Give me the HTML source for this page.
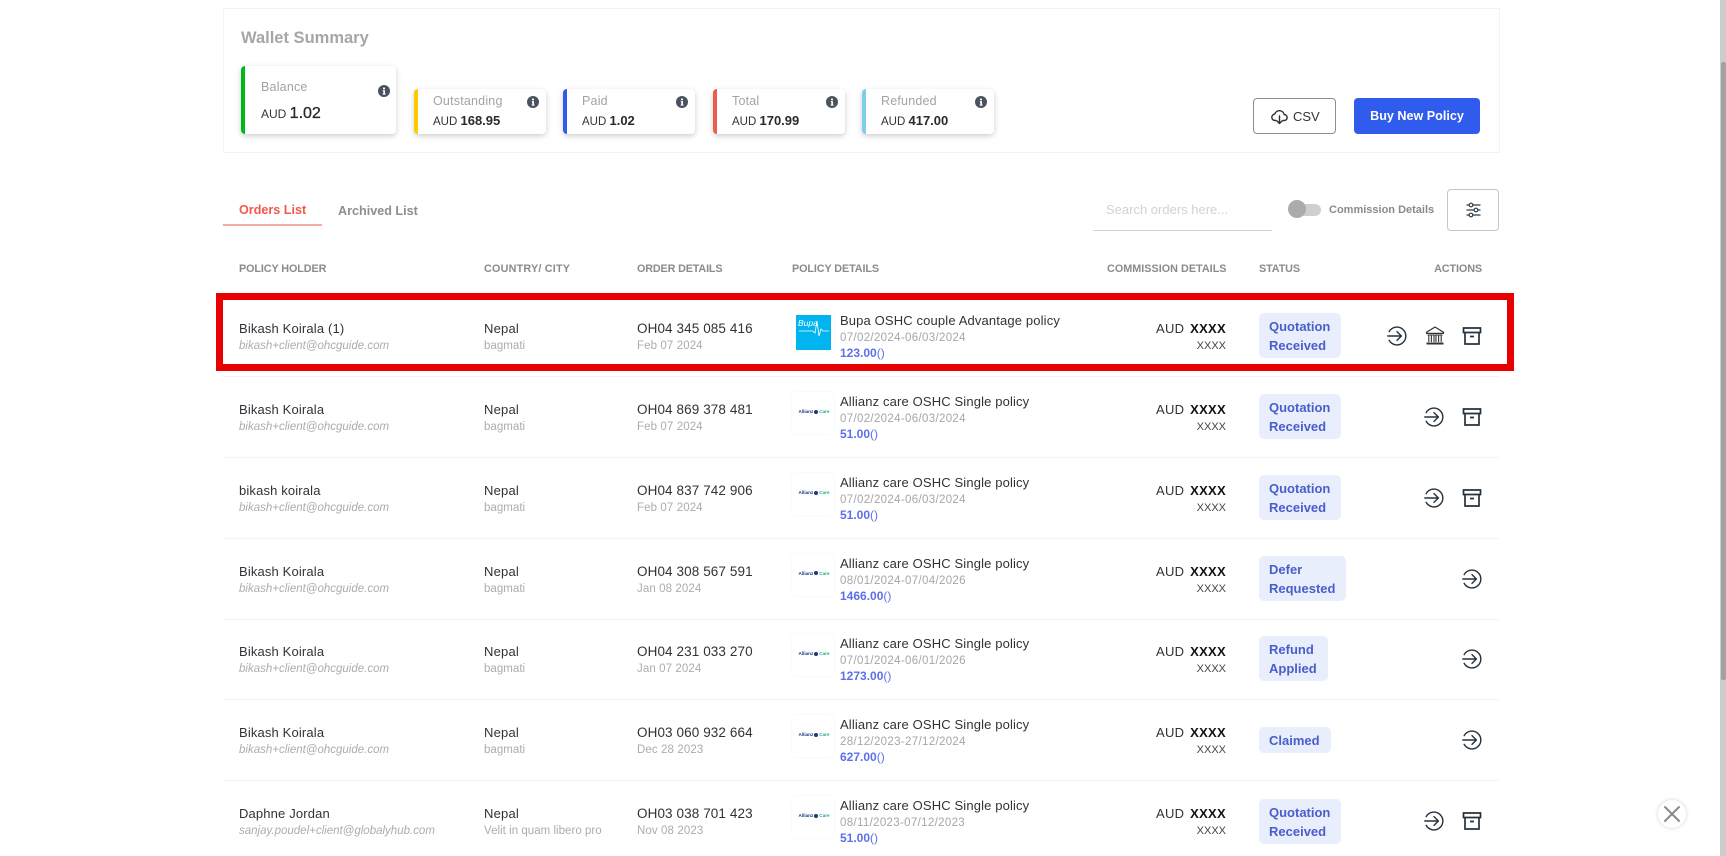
<!DOCTYPE html>
<html lang="en">
<head>
<meta charset="utf-8">
<title>Orders</title>
<style>
html,body{margin:0;padding:0;width:1726px;height:856px;overflow:hidden;background:#fff}
body{position:relative;font-family:"Liberation Sans",sans-serif;color:#2a2f36}
.a{position:absolute;white-space:nowrap}
.box{position:absolute;left:223px;top:8px;width:1275px;height:143px;border:1px solid #f3f3f3}
.card{position:absolute;background:#fff;border-radius:4px;box-shadow:0 2px 6px rgba(0,0,0,.2);box-sizing:border-box;border-left:4px solid}
.card .l{position:absolute;left:15px;top:9px;font-size:12.5px;line-height:16px;color:#a3a3a3;letter-spacing:.2px}
.card .v{position:absolute;left:15px;top:25px;font-size:11.5px;line-height:18px;color:#333;white-space:nowrap}
.card .v b{font-size:13px;font-weight:bold;color:#2a2a2a;letter-spacing:0}
.card svg{position:absolute;right:7px;top:6px}
.big .l{left:16px;top:13px}.big .v{left:16px;top:39px;font-size:12px}.big .v b{font-size:16px;font-weight:normal;-webkit-text-stroke:.3px #222;letter-spacing:0}
.th{position:absolute;top:262px;font-size:10.8px;line-height:14px;color:#8b8b8b;font-weight:bold;letter-spacing:-.1px;white-space:nowrap}
.row{position:absolute;left:0;width:1726px;height:81px}
.row .ln{position:absolute;left:223px;right:227px;top:81px;height:1px;background:#f3f3f3}
.nm{position:absolute;left:239px;top:26px;font-size:13px;line-height:16px;color:#2f3338;letter-spacing:.15px;white-space:nowrap}
.em{position:absolute;left:239px;top:44px;font-size:11.5px;line-height:14px;color:#acacac;font-style:italic;letter-spacing:0;white-space:nowrap}
.ct{position:absolute;left:484px;top:26px;font-size:13px;line-height:16px;color:#2f3338;letter-spacing:.2px;white-space:nowrap}
.ci{position:absolute;left:484px;top:44px;font-size:11.5px;line-height:14px;color:#acacac;letter-spacing:.03px;white-space:nowrap}
.od{position:absolute;left:637px;top:26px;font-size:13.5px;line-height:16px;color:#2f3338;letter-spacing:.1px;white-space:nowrap}
.dt{position:absolute;left:637px;top:44px;font-size:11.5px;line-height:14px;color:#acacac;letter-spacing:.1px;white-space:nowrap}
.lg{position:absolute;left:792px;top:16px;width:42px;height:42px;background:#fff;border-radius:4px;box-shadow:0 0 2px rgba(0,0,0,.06);overflow:hidden}
.bp{position:absolute;left:4px;top:4px;width:35px;height:35px;background:#00b4f0}
.bp span{position:absolute;left:2px;top:3px;font-size:8.5px;line-height:10px;font-style:italic;color:#fff}
.bp svg{position:absolute;left:0;top:0}
.az{position:absolute;left:4px;top:17px;width:36px;text-align:center;font-size:4.6px;line-height:6px;font-weight:bold;color:#1a3a7c;white-space:nowrap}
.az i{font-style:normal;color:#2aa58c}
.az u{display:inline-block;width:4px;height:4px;border-radius:50%;background:#1a3a7c;margin:0 1px;vertical-align:-.5px;text-decoration:none}
.pt{position:absolute;left:840px;top:18px;font-size:13px;line-height:16px;color:#2f3338;letter-spacing:.14px;white-space:nowrap}
.pd{position:absolute;left:840px;top:36px;font-size:11.5px;line-height:14px;color:#a6a6a6;letter-spacing:.33px;white-space:nowrap}
.pa{position:absolute;left:840px;top:51px;font-size:12px;line-height:14px;color:#5b70ea;font-weight:bold;white-space:nowrap}
.pa span{font-weight:normal}
.au{position:absolute;left:1156px;top:26px;font-size:13px;line-height:16px;color:#333;letter-spacing:.3px}
.xb{position:absolute;right:500px;top:26px;font-size:13px;line-height:16px;color:#111;font-weight:bold;letter-spacing:.3px}
.xs{position:absolute;right:500px;top:44px;font-size:11px;line-height:14px;color:#444;letter-spacing:0}
.bd{position:absolute;left:1259px;top:18px;height:45px;box-sizing:border-box;padding:4px 11px 4px 10px;background:#e8eefc;border-radius:5px;font-size:13px;line-height:19px;color:#4a5ecb;font-weight:bold;letter-spacing:0;white-space:nowrap}
.bd.one{top:27px;height:26px;padding:4px 11px 4px 10px}
.ic{position:absolute;top:31px}
</style>
</head>
<body>
<svg width="0" height="0" style="position:absolute">
<symbol id="arrow" viewBox="0 0 20 20"><path d="M2.2 5.6A8.9 8.9 0 1 1 2.2 14.4" fill="none" stroke="#25323d" stroke-width="1.4" stroke-linecap="round"/><path d="M.8 10H14.2M10 5.6l4.4 4.4L10 14.4" fill="none" stroke="#25323d" stroke-width="1.4" stroke-linecap="round" stroke-linejoin="round"/></symbol>
<symbol id="arch" viewBox="0 0 20 20"><path d="M1.5 2h17v4.5h-17zM3 6.5V18h14V6.5M8 10.5h4" fill="none" stroke="#25323d" stroke-width="1.7"/></symbol>
<symbol id="bank" viewBox="0 0 20 20"><path d="M10 1L18.5 6.3V7.4H1.5V6.3z" fill="none" stroke="#333" stroke-width="1.2" stroke-linejoin="round"/><path d="M2.5 9h15M3.8 9.5v6.5M6.4 9.5v6.5M9 9.5v6.5M11 9.5v6.5M13.6 9.5v6.5M16.2 9.5v6.5" fill="none" stroke="#333" stroke-width="1.1"/><path d="M1.5 16.5h17v2h-17z" fill="#333"/></symbol>
<symbol id="info" viewBox="0 0 12 12"><circle cx="6" cy="6" r="6" fill="#4a5260"/><path d="M5 2.6h2v1.6H5zM4.8 5.1h2.2v3.5h.6v1H4.6v-1h.7V6.1h-.5z" fill="#fff"/></symbol>
</svg>

<div class="box"></div>
<div class="a" style="left:241px;top:28px;font-size:16.5px;line-height:20px;font-weight:bold;color:#a6a6a6">Wallet Summary</div>

<div class="card big" style="left:241px;top:66px;width:155px;height:68px;border-left-color:#00b81c"><div class="l">Balance</div><div class="v">AUD <b>1.02</b></div><svg width="12" height="12" style="top:19px;right:6px"><use href="#info"/></svg></div>
<div class="card" style="left:414px;top:89px;width:132px;height:45px;border-left-color:#ffcb00"><div class="l" style="top:4px">Outstanding</div><div class="v" style="top:23px">AUD <b>168.95</b></div><svg width="12" height="12" style="top:7px"><use href="#info"/></svg></div>
<div class="card" style="left:563px;top:89px;width:132px;height:45px;border-left-color:#2f5cec"><div class="l" style="top:4px">Paid</div><div class="v" style="top:23px">AUD <b>1.02</b></div><svg width="12" height="12" style="top:7px"><use href="#info"/></svg></div>
<div class="card" style="left:713px;top:89px;width:132px;height:45px;border-left-color:#ec5b4c"><div class="l" style="top:4px">Total</div><div class="v" style="top:23px">AUD <b>170.99</b></div><svg width="12" height="12" style="top:7px"><use href="#info"/></svg></div>
<div class="card" style="left:862px;top:89px;width:132px;height:45px;border-left-color:#7fcdee"><div class="l" style="top:4px">Refunded</div><div class="v" style="top:23px">AUD <b>417.00</b></div><svg width="12" height="12" style="top:7px"><use href="#info"/></svg></div>

<div class="a" style="left:1253px;top:98px;width:83px;height:36px;box-sizing:border-box;border:1px solid #8e8e8e;border-radius:4px;background:#fff"></div>
<svg class="a" style="left:1271px;top:108px" width="17" height="17" viewBox="0 0 17 17"><path d="M5 12.5H4.2a3.2 3.2 0 0 1-.4-6.4 4.8 4.8 0 0 1 9.3.4 3 3 0 0 1 .1 6H12M8.5 8v7.5M6 13l2.5 2.5L11 13" fill="none" stroke="#2a2f36" stroke-width="1.4" stroke-linecap="round" stroke-linejoin="round"/></svg>
<div class="a" style="left:1293px;top:109px;font-size:13px;line-height:16px;color:#333">CSV</div>
<div class="a" style="left:1354px;top:98px;width:126px;height:36px;background:#2f5cec;border-radius:4px;color:#fff;font-size:12.6px;font-weight:bold;line-height:36px;text-align:center">Buy New Policy</div>

<div class="a" style="left:239px;top:202px;font-size:12.6px;line-height:16px;font-weight:bold;color:#f0594c">Orders List</div>
<div class="a" style="left:223px;top:224px;width:99px;height:2px;background:#f6aaa4"></div>
<div class="a" style="left:338px;top:203px;font-size:12.6px;line-height:16px;font-weight:bold;color:#8e8e8e">Archived List</div>

<div class="a" style="left:1093px;top:230px;width:179px;height:1px;background:#d4d4d4"></div>
<div class="a" style="left:1106px;top:202px;font-size:13px;line-height:16px;color:#d2d2d2">Search orders here...</div>
<div class="a" style="left:1290px;top:204px;width:31px;height:12px;background:#cfcfcf;border-radius:6px"></div>
<div class="a" style="left:1288px;top:200px;width:18px;height:18px;background:#ababab;border-radius:50%"></div>
<div class="a" style="left:1329px;top:203px;font-size:11px;line-height:15px;font-weight:bold;color:#8a8a8a">Commission Details</div>
<div class="a" style="left:1447px;top:189px;width:52px;height:42px;box-sizing:border-box;border:1px solid #c6c6c6;border-radius:4px;background:#fff"></div>
<svg class="a" style="left:1466px;top:202px" width="15" height="16" viewBox="0 0 15 16"><path d="M.5 3h14M.5 8h14M.5 13h14" stroke="#2f3c48" stroke-width="1.3" fill="none"/><circle cx="5" cy="3" r="1.8" fill="#fff" stroke="#2f3c48" stroke-width="1.2"/><circle cx="10" cy="8" r="1.8" fill="#fff" stroke="#2f3c48" stroke-width="1.2"/><circle cx="5" cy="13" r="1.8" fill="#fff" stroke="#2f3c48" stroke-width="1.2"/></svg>

<div class="th" style="left:239px">POLICY HOLDER</div>
<div class="th" style="left:484px;letter-spacing:.2px">COUNTRY/ CITY</div>
<div class="th" style="left:637px;letter-spacing:-.15px">ORDER DETAILS</div>
<div class="th" style="left:792px">POLICY DETAILS</div>
<div class="th" style="left:1107px;letter-spacing:.02px">COMMISSION DETAILS</div>
<div class="th" style="left:1259px">STATUS</div>
<div class="th" style="right:244px">ACTIONS</div>

<div class="row" style="top:295px"><div class="ln"></div>
<div class="nm">Bikash Koirala (1)</div><div class="em">bikash+client@ohcguide.com</div>
<div class="ct">Nepal</div><div class="ci">bagmati</div>
<div class="od">OH04 345 085 416</div><div class="dt">Feb 07 2024</div>
<div class="lg"><div class="bp"><span>Bupa</span><svg width="35" height="35" viewBox="0 0 35 35"><path d="M3 16h14l2 2 2-12 2 15 2-7 2 2h6" fill="none" stroke="#fff" stroke-width=".8"/></svg></div></div>
<div class="pt">Bupa OSHC couple Advantage policy</div><div class="pd">07/02/2024-06/03/2024</div><div class="pa">123.00<span>()</span></div>
<div class="au">AUD</div><div class="xb">XXXX</div><div class="xs">XXXX</div>
<div class="bd">Quotation<br>Received</div>
<svg class="ic" style="left:1387px" width="20" height="20"><use href="#arrow"/></svg>
<svg class="ic" style="left:1425px" width="20" height="20"><use href="#bank"/></svg>
<svg class="ic" style="left:1462px" width="20" height="20"><use href="#arch"/></svg>
</div>

<div class="row" style="top:376px"><div class="ln"></div>
<div class="nm">Bikash Koirala</div><div class="em">bikash+client@ohcguide.com</div>
<div class="ct">Nepal</div><div class="ci">bagmati</div>
<div class="od">OH04 869 378 481</div><div class="dt">Feb 07 2024</div>
<div class="lg"><div class="az">Allianz<u></u><i>Care</i></div></div>
<div class="pt">Allianz care OSHC Single policy</div><div class="pd">07/02/2024-06/03/2024</div><div class="pa">51.00<span>()</span></div>
<div class="au">AUD</div><div class="xb">XXXX</div><div class="xs">XXXX</div>
<div class="bd">Quotation<br>Received</div>
<svg class="ic" style="left:1424px" width="20" height="20"><use href="#arrow"/></svg>
<svg class="ic" style="left:1462px" width="20" height="20"><use href="#arch"/></svg>
</div>

<div class="row" style="top:457px"><div class="ln"></div>
<div class="nm">bikash koirala</div><div class="em">bikash+client@ohcguide.com</div>
<div class="ct">Nepal</div><div class="ci">bagmati</div>
<div class="od">OH04 837 742 906</div><div class="dt">Feb 07 2024</div>
<div class="lg"><div class="az">Allianz<u></u><i>Care</i></div></div>
<div class="pt">Allianz care OSHC Single policy</div><div class="pd">07/02/2024-06/03/2024</div><div class="pa">51.00<span>()</span></div>
<div class="au">AUD</div><div class="xb">XXXX</div><div class="xs">XXXX</div>
<div class="bd">Quotation<br>Received</div>
<svg class="ic" style="left:1424px" width="20" height="20"><use href="#arrow"/></svg>
<svg class="ic" style="left:1462px" width="20" height="20"><use href="#arch"/></svg>
</div>

<div class="row" style="top:537.6px"><div class="ln"></div>
<div class="nm">Bikash Koirala</div><div class="em">bikash+client@ohcguide.com</div>
<div class="ct">Nepal</div><div class="ci">bagmati</div>
<div class="od">OH04 308 567 591</div><div class="dt">Jan 08 2024</div>
<div class="lg"><div class="az">Allianz<u></u><i>Care</i></div></div>
<div class="pt">Allianz care OSHC Single policy</div><div class="pd">08/01/2024-07/04/2026</div><div class="pa">1466.00<span>()</span></div>
<div class="au">AUD</div><div class="xb">XXXX</div><div class="xs">XXXX</div>
<div class="bd">Defer<br>Requested</div>
<svg class="ic" style="left:1462px" width="20" height="20"><use href="#arrow"/></svg>
</div>

<div class="row" style="top:618.4px"><div class="ln"></div>
<div class="nm">Bikash Koirala</div><div class="em">bikash+client@ohcguide.com</div>
<div class="ct">Nepal</div><div class="ci">bagmati</div>
<div class="od">OH04 231 033 270</div><div class="dt">Jan 07 2024</div>
<div class="lg"><div class="az">Allianz<u></u><i>Care</i></div></div>
<div class="pt">Allianz care OSHC Single policy</div><div class="pd">07/01/2024-06/01/2026</div><div class="pa">1273.00<span>()</span></div>
<div class="au">AUD</div><div class="xb">XXXX</div><div class="xs">XXXX</div>
<div class="bd">Refund<br>Applied</div>
<svg class="ic" style="left:1462px" width="20" height="20"><use href="#arrow"/></svg>
</div>

<div class="row" style="top:699.2px"><div class="ln"></div>
<div class="nm">Bikash Koirala</div><div class="em">bikash+client@ohcguide.com</div>
<div class="ct">Nepal</div><div class="ci">bagmati</div>
<div class="od">OH03 060 932 664</div><div class="dt">Dec 28 2023</div>
<div class="lg"><div class="az">Allianz<u></u><i>Care</i></div></div>
<div class="pt">Allianz care OSHC Single policy</div><div class="pd">28/12/2023-27/12/2024</div><div class="pa">627.00<span>()</span></div>
<div class="au">AUD</div><div class="xb">XXXX</div><div class="xs">XXXX</div>
<div class="bd one" style="top:28px">Claimed</div>
<svg class="ic" style="left:1462px" width="20" height="20"><use href="#arrow"/></svg>
</div>

<div class="row" style="top:780px"><div class="ln"></div>
<div class="nm">Daphne Jordan</div><div class="em">sanjay.poudel+client@globalyhub.com</div>
<div class="ct">Nepal</div><div class="ci">Velit in quam libero pro</div>
<div class="od">OH03 038 701 423</div><div class="dt">Nov 08 2023</div>
<div class="lg"><div class="az">Allianz<u></u><i>Care</i></div></div>
<div class="pt">Allianz care OSHC Single policy</div><div class="pd">08/11/2023-07/12/2023</div><div class="pa">51.00<span>()</span></div>
<div class="au">AUD</div><div class="xb">XXXX</div><div class="xs">XXXX</div>
<div class="bd" style="top:19px">Quotation<br>Received</div>
<svg class="ic" style="left:1424px" width="20" height="20"><use href="#arrow"/></svg>
<svg class="ic" style="left:1462px" width="20" height="20"><use href="#arch"/></svg>
</div>

<div class="a" style="left:216px;top:293px;width:1298px;height:78px;box-sizing:border-box;border:7px solid #e60000"></div>

<div class="a" style="left:1720px;top:0;width:6px;height:856px;background:#cdcdcd"></div>
<div class="a" style="left:1721px;top:62px;width:5px;height:618px;background:#a2a2a2;border-radius:2px"></div>

<div class="a" style="left:1658px;top:800px;width:28px;height:28px;background:#fff;border-radius:50%;box-shadow:0 0 4px rgba(0,0,0,.18)"></div>
<svg class="a" style="left:1663px;top:805px" width="18" height="18" viewBox="0 0 18 18"><path d="M2 2l14 14M16 2L2 16" stroke="#8a8a8a" stroke-width="2" stroke-linecap="round"/></svg>
</body>
</html>
